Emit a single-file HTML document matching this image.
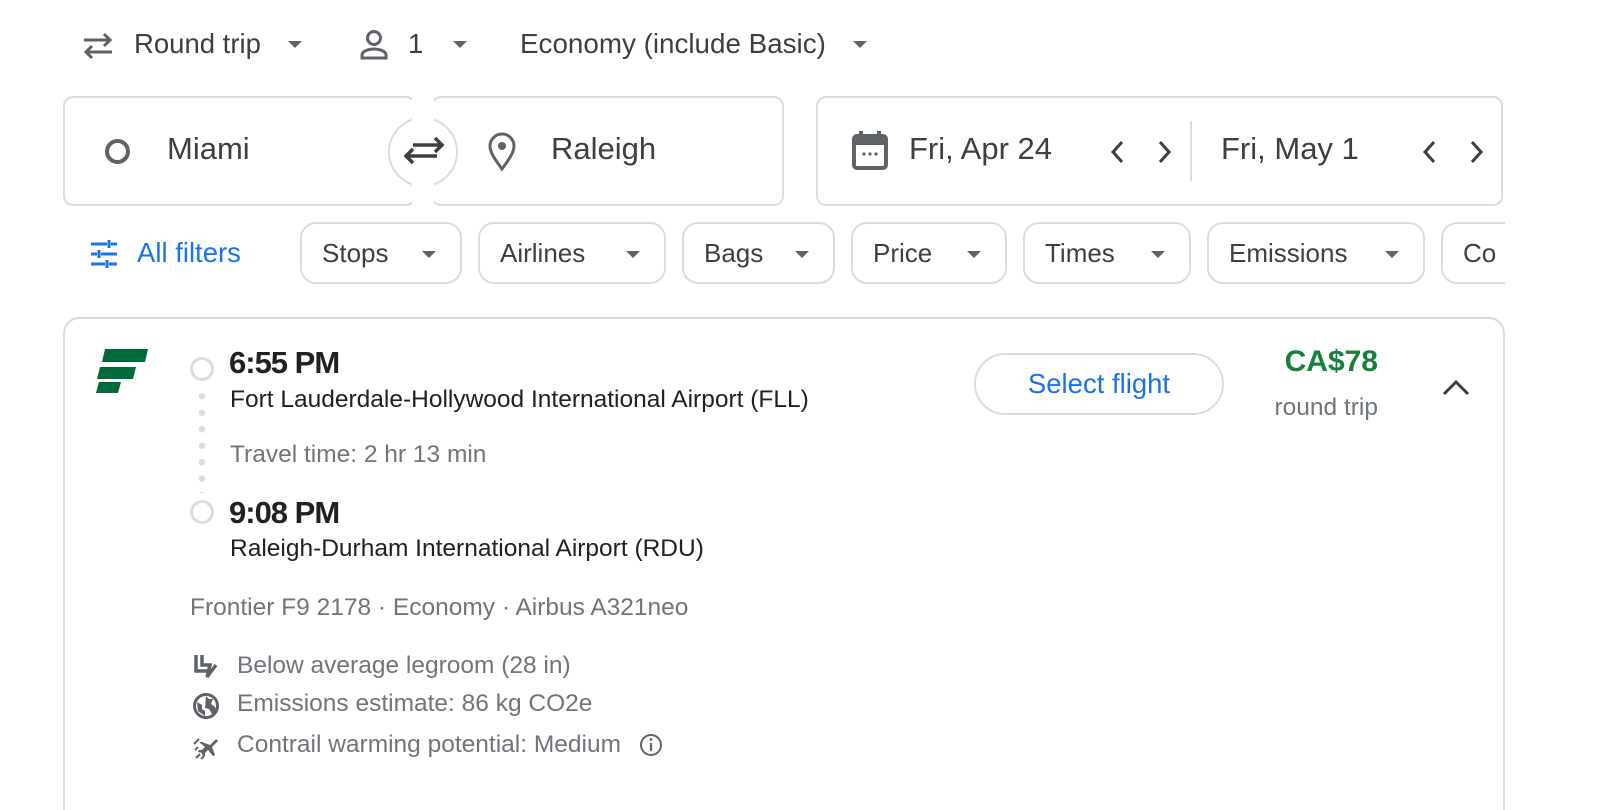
<!DOCTYPE html>
<html><head><meta charset="utf-8"><style>
*{box-sizing:border-box;margin:0;padding:0}
html,body{width:1600px;height:810px;overflow:hidden;background:#fff}
body{font-family:"Liberation Sans",Arial,sans-serif;color:#3c4043}
#w{position:relative;width:1600px;height:810px;overflow:hidden}
.a{position:absolute;white-space:nowrap}
.box{position:absolute;border:2px solid #dadce0;border-radius:10px}
.chip{position:absolute;top:222px;height:62px;border:2px solid #dadce0;border-radius:16px;font-size:26px;color:#3c4043;padding-left:20px;line-height:58px}
.tri{display:inline-block;width:0;height:0;border-left:7px solid transparent;border-right:7px solid transparent;border-top:7px solid #5f6368;vertical-align:middle}
.chip .tri{position:absolute;right:24px;top:27px}
.g{color:#70757a}
.d{font-size:24.5px}
</style></head><body><div id="w">
<svg class="a" style="left:80px;top:30px" width="36" height="32" viewBox="0 0 36 32"><path d="M4 10h26M24 4l6 6-6 6M32 22H6M12 16l-6 6 6 6" stroke="#5f6368" stroke-width="3" fill="none"/></svg>
<div class="a" style="left:134px;top:28px;font-size:27.5px">Round trip</div>
<span class="a tri" style="left:288px;top:41px"></span>
<svg class="a" style="left:358px;top:28px" width="32" height="34" viewBox="0 0 32 34"><circle cx="16" cy="10" r="6.5" stroke="#5f6368" stroke-width="3" fill="none"/><path d="M4 30v-3c0-4 7-6 12-6s12 2 12 6v3z" stroke="#5f6368" stroke-width="3" fill="none"/></svg>
<div class="a" style="left:408px;top:28px;font-size:27.5px">1</div>
<span class="a tri" style="left:453px;top:41px"></span>
<div class="a" style="left:520px;top:28px;font-size:27.8px">Economy (include Basic)</div>
<span class="a tri" style="left:853px;top:41px"></span>
<div class="box" style="left:63px;top:96px;width:353px;height:110px"></div>
<div class="box" style="left:431px;top:96px;width:353px;height:110px"></div>
<div class="a" style="left:388px;top:117px;width:70px;height:70px;border:2px solid #dadce0;border-radius:50%;background:#fff"></div>
<div class="a" style="left:412px;top:93px;width:22px;height:118px;background:#fff"></div>
<svg class="a" style="left:401px;top:132px" width="46" height="38" viewBox="0 0 46 38"><path d="M6 24h30M12 17l-7 7 7 7M40 13H12M34 6l7 7-7 7" stroke="#3c4043" stroke-width="3.5" fill="none"/></svg>
<div class="a" style="left:105px;top:139px;width:25px;height:25px;border:4.5px solid #5f6368;border-radius:50%"></div>
<div class="a" style="left:167px;top:131px;font-size:31px;color:#3c4043">Miami</div>
<svg class="a" style="left:486px;top:132px" width="32" height="40" viewBox="0 0 32 40"><path d="M16 37C8 26 4 20 4 14a12 12 0 0 1 24 0c0 6-4 12-12 23z" stroke="#5f6368" stroke-width="3" fill="none"/><circle cx="16" cy="14" r="4" fill="#5f6368"/></svg>
<div class="a" style="left:551px;top:131px;font-size:31px">Raleigh</div>
<div class="box" style="left:816px;top:96px;width:687px;height:110px"></div>
<svg class="a" style="left:851px;top:130px" width="38" height="40" viewBox="0 0 38 40"><rect x="3" y="6" width="32" height="32" rx="3" stroke="#5f6368" stroke-width="4" fill="none"/><rect x="3" y="6" width="32" height="9" fill="#5f6368"/><rect x="8" y="1" width="4" height="8" fill="#5f6368"/><rect x="26" y="1" width="4" height="8" fill="#5f6368"/><circle cx="13" cy="24" r="1.6" fill="#5f6368"/><circle cx="19" cy="24" r="1.6" fill="#5f6368"/><circle cx="25" cy="24" r="1.6" fill="#5f6368"/></svg>
<div class="a" style="left:909px;top:131px;font-size:31px">Fri, Apr 24</div>
<svg class="a" style="left:1106px;top:138px" width="70" height="28" viewBox="0 0 70 28"><path d="M16 4l-9 10 9 10M54 4l9 10-9 10" stroke="#3c4043" stroke-width="3" fill="none"/></svg>
<div class="a" style="left:1190px;top:121px;width:2px;height:60px;background:#dadce0"></div>
<div class="a" style="left:1221px;top:131px;font-size:31px">Fri, May 1</div>
<svg class="a" style="left:1418px;top:138px" width="70" height="28" viewBox="0 0 70 28"><path d="M16 4l-9 10 9 10M54 4l9 10-9 10" stroke="#3c4043" stroke-width="3" fill="none"/></svg>
<svg class="a" style="left:89px;top:239px" width="30" height="30" viewBox="0 0 30 30"><path d="M2 5h16M22 5h6M2 15h6M12 15h16M2 25h14M20 25h8M20 1v8M10 11v8M18 21v8" stroke="#1a73e8" stroke-width="3" fill="none"/></svg>
<div class="a" style="left:137px;top:237px;font-size:27.5px;color:#1a73e8">All filters</div>
<div class="chip" style="left:300px;width:162px">Stops<span class="tri"></span></div>
<div class="chip" style="left:478px;width:188px">Airlines<span class="tri"></span></div>
<div class="chip" style="left:682px;width:153px">Bags<span class="tri"></span></div>
<div class="chip" style="left:851px;width:156px">Price<span class="tri"></span></div>
<div class="chip" style="left:1023px;width:168px">Times<span class="tri"></span></div>
<div class="chip" style="left:1207px;width:218px">Emissions<span class="tri"></span></div>
<div class="chip" style="left:1441px;width:64px;border-right:none;border-radius:16px 0 0 16px">Co</div>
<div class="box" style="left:63px;top:317px;width:1442px;height:493px;border-radius:16px 16px 0 0;border-bottom:none"></div>
<svg class="a" style="left:95px;top:348px" width="54" height="46" viewBox="0 0 54 46"><path d="M10 1h43l-3 13H7zM5 19h36l-3 12H2zM4 34h22l-3 11H1z" fill="#006a3b"/></svg>
<div class="a" style="left:190px;top:357px;width:24px;height:24px;border:3px solid #dadce0;border-radius:50%"></div>
<div class="a" style="left:198px;top:388px;width:8px;height:105px;background:radial-gradient(circle,#dadce0 3px,transparent 3.5px) 0 0/8px 16.5px repeat-y"></div>
<div class="a" style="left:190px;top:500px;width:24px;height:24px;border:3px solid #dadce0;border-radius:50%"></div>
<div class="a" style="left:229px;top:345px;font-size:31px;font-weight:bold;color:#202124;letter-spacing:-1px">6:55 PM</div>
<div class="a d" style="left:230px;top:386px;color:#202124">Fort Lauderdale-Hollywood International Airport (FLL)</div>
<div class="a g d" style="left:230px;top:441px">Travel time: 2 hr 13 min</div>
<div class="a" style="left:229px;top:495px;font-size:31px;font-weight:bold;color:#202124;letter-spacing:-1px">9:08 PM</div>
<div class="a d" style="left:230px;top:535px;color:#202124">Raleigh-Durham International Airport (RDU)</div>
<div class="a g d" style="left:190px;top:594px">Frontier F9 2178 · Economy · Airbus A321neo</div>
<svg class="a" style="left:193px;top:653px" width="26" height="28" viewBox="0 0 26 28"><path d="M3 2v16h12" stroke="#5f6368" stroke-width="3.5" fill="none"/><path d="M9 2v10h8l-3 12 9-12" stroke="#5f6368" stroke-width="3.5" fill="none"/></svg>
<div class="a g d" style="left:237px;top:652px">Below average legroom (28 in)</div>
<svg class="a" style="left:192px;top:692px" width="28" height="28" viewBox="0 0 28 28"><circle cx="14" cy="14" r="11.5" fill="none" stroke="#5f6368" stroke-width="3"/><path d="M5 10l5 3v4l3 2v5l-7-5zM14 4l3 3h4l-2 5 4 3 1 5-4 2-3-5-4-1z" fill="#5f6368"/></svg>
<div class="a g d" style="left:237px;top:690px">Emissions estimate: 86 kg CO2e</div>
<svg class="a" style="left:192px;top:732px" width="28" height="28" viewBox="0 0 28 28"><path d="M10 10l8 3 6-6 2 2-6 6 3 8-2 1-5-6-3 3v3l-2 1-1-4-4-1 1-2h3l3-3-6-5z" fill="#5f6368"/><path d="M2 12l5-5M3 18l3-3M4 26l4-4M9 27l3-3" stroke="#5f6368" stroke-width="2"/></svg>
<div class="a g d" style="left:237px;top:731px">Contrail warming potential: Medium</div>
<svg class="a" style="left:639px;top:733px" width="24" height="24" viewBox="0 0 24 24"><circle cx="12" cy="12" r="10" stroke="#5f6368" stroke-width="2" fill="none"/><path d="M12 10v8" stroke="#5f6368" stroke-width="2.2"/><circle cx="12" cy="6.5" r="1.4" fill="#5f6368"/></svg>
<div class="a" style="left:974px;top:353px;width:250px;height:62px;border:2px solid #dadce0;border-radius:31px;text-align:center;line-height:58px;font-size:27.5px;color:#1a73e8">Select flight</div>
<div class="a" style="left:1200px;top:345px;width:178px;text-align:right;font-size:30px;font-weight:bold;color:#188038">CA$78</div>
<div class="a g d" style="left:1200px;top:394px;width:178px;text-align:right">round trip</div>
<svg class="a" style="left:1440px;top:376px" width="32" height="22" viewBox="0 0 32 22"><path d="M4 18L16 6l12 12" stroke="#3c4043" stroke-width="3" fill="none"/></svg>
</div></body></html>
